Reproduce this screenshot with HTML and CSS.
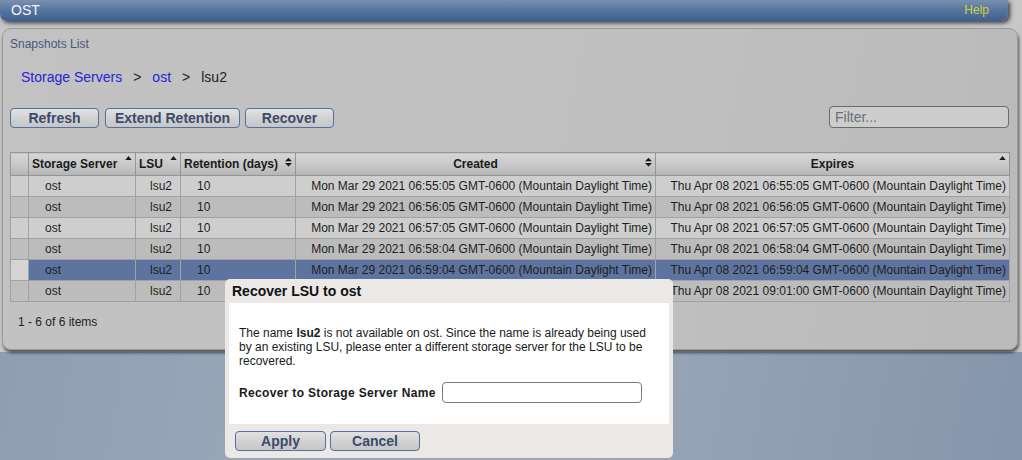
FILE: index.html
```html
<!DOCTYPE html>
<html>
<head>
<meta charset="utf-8">
<link rel="stylesheet" href="styles.css">
</head>
<body>
<div class="app">
  <div class="topbar">
    <span class="app-title">OST</span>
    <a class="help">Help</a>
  </div>
  <div class="panel">
    <div class="panel-title">Snapshots List</div>
    <div class="crumbs">
      <a class="crumb-link">Storage Servers</a><span class="sep">&gt;</span><a class="crumb-link">ost</a><span class="sep">&gt;</span><span class="crumb-cur">lsu2</span>
    </div>
    <div class="toolbar">
      <button class="btn btn-refresh">Refresh</button>
      <button class="btn btn-extend">Extend Retention</button>
      <button class="btn btn-recover">Recover</button>
      <input class="filter" placeholder="Filter...">
    </div>
    <table class="grid">
      <colgroup>
        <col class="c-sel"><col class="c-ss"><col class="c-lsu"><col class="c-ret"><col class="c-cr"><col class="c-ex">
      </colgroup>
      <thead>
        <tr>
          <th></th>
          <th class="th-left">Storage Server<svg class="sort up" width="7" height="4" viewBox="0 0 8 5"><path d="M0 5L4 0L8 5Z"/></svg></th>
          <th class="th-left">LSU<svg class="sort up" width="7" height="4" viewBox="0 0 8 5"><path d="M0 5L4 0L8 5Z"/></svg></th>
          <th class="th-left">Retention (days)<svg class="sort both" width="7" height="10" viewBox="0 0 8 10"><path d="M0 4L4 0L8 4Z M0 6L8 6L4 10Z"/></svg></th>
          <th>Created<svg class="sort both" width="7" height="10" viewBox="0 0 8 10"><path d="M0 4L4 0L8 4Z M0 6L8 6L4 10Z"/></svg></th>
          <th>Expires<svg class="sort up" width="7" height="4" viewBox="0 0 8 5"><path d="M0 5L4 0L8 5Z"/></svg></th>
        </tr>
      </thead>
      <tbody>
        <tr class="odd"><td class="sel"></td><td class="ss">ost</td><td class="lsu">lsu2</td><td class="ret">10</td><td class="dt">Mon Mar 29 2021 06:55:05 GMT-0600 (Mountain Daylight Time)</td><td class="dt">Thu Apr 08 2021 06:55:05 GMT-0600 (Mountain Daylight Time)</td></tr>
        <tr class="even"><td class="sel"></td><td class="ss">ost</td><td class="lsu">lsu2</td><td class="ret">10</td><td class="dt">Mon Mar 29 2021 06:56:05 GMT-0600 (Mountain Daylight Time)</td><td class="dt">Thu Apr 08 2021 06:56:05 GMT-0600 (Mountain Daylight Time)</td></tr>
        <tr class="odd"><td class="sel"></td><td class="ss">ost</td><td class="lsu">lsu2</td><td class="ret">10</td><td class="dt">Mon Mar 29 2021 06:57:05 GMT-0600 (Mountain Daylight Time)</td><td class="dt">Thu Apr 08 2021 06:57:05 GMT-0600 (Mountain Daylight Time)</td></tr>
        <tr class="even"><td class="sel"></td><td class="ss">ost</td><td class="lsu">lsu2</td><td class="ret">10</td><td class="dt">Mon Mar 29 2021 06:58:04 GMT-0600 (Mountain Daylight Time)</td><td class="dt">Thu Apr 08 2021 06:58:04 GMT-0600 (Mountain Daylight Time)</td></tr>
        <tr class="selected"><td class="sel"></td><td class="ss">ost</td><td class="lsu">lsu2</td><td class="ret">10</td><td class="dt">Mon Mar 29 2021 06:59:04 GMT-0600 (Mountain Daylight Time)</td><td class="dt">Thu Apr 08 2021 06:59:04 GMT-0600 (Mountain Daylight Time)</td></tr>
        <tr class="even"><td class="sel"></td><td class="ss">ost</td><td class="lsu">lsu2</td><td class="ret">10</td><td class="dt">Mon Mar 29 2021 09:01:00 GMT-0600 (Mountain Daylight Time)</td><td class="dt">Thu Apr 08 2021 09:01:00 GMT-0600 (Mountain Daylight Time)</td></tr>
      </tbody>
    </table>
    <div class="pager">1 - 6 of 6 items</div>
  </div>
</div>

<div class="dialog">
  <div class="dlg-title">Recover LSU to ost</div>
  <div class="dlg-body">
    <p class="dlg-text">The name <b>lsu2</b> is not available on ost. Since the name is already being used by an existing LSU, please enter a different storage server for the LSU to be recovered.</p>
    <div class="dlg-field">
      <label class="dlg-label">Recover to Storage Server Name</label>
      <input class="dlg-input">
    </div>
  </div>
  <div class="dlg-actions">
    <button class="btn btn-apply">Apply</button>
    <button class="btn btn-cancel">Cancel</button>
  </div>
</div>
</body>
</html>
```

FILE: styles.css
```css
html, body {
  margin: 0;
  padding: 0;
}
body {
  width: 1022px;
  height: 460px;
  overflow: hidden;
  font-family: "Liberation Sans", Arial, sans-serif;
  background: linear-gradient(100deg, #8d9cb0 0%, #98a6b8 30%, #9aa7b9 60%, #8595ab 100%);
  position: relative;
}
.app {
  background: #c7c7c7;
  padding-bottom: 2px;
}
.topbar {
  width: 1008px;
  height: 21px;
  box-sizing: border-box;
  background: linear-gradient(to bottom, #7a90b0 0%, #5a76a0 45%, #3e5f91 100%);
  border-radius: 0 0 7px 7px;
  box-shadow: 2px 2px 4px rgba(0, 0, 0, 0.7);
  display: flex;
  align-items: center;
  justify-content: space-between;
  padding: 0 19px 1px 11px;
}
.app-title {
  color: #f2f4f8;
  font-size: 14px;
}
.help {
  color: #c9d43c;
  font-size: 12px;
}
.panel {
  margin: 7px 4px 0 2px;
  height: 322px;
  box-sizing: border-box;
  background: linear-gradient(100deg, #c2c2c2 0%, #c0c0c0 60%, #bababa 100%);
  border: 1px solid #9a9a9a;
  border-radius: 9px;
  box-shadow: 1px 3px 3px rgba(0, 0, 0, 0.55);
  padding: 7px 8px 0 7px;
}
.panel-title {
  font-size: 12px;
  line-height: 16px;
  color: #4a5676;
}
.crumbs {
  margin-top: 16px;
  padding-left: 11px;
  font-size: 14px;
  line-height: 18px;
  display: flex;
}
.crumb-link {
  color: #2424d8;
}
.sep {
  color: #222;
  margin: 0 11px;
}
.crumb-cur {
  color: #222;
}
.toolbar {
  margin-top: 20px;
  display: flex;
  align-items: center;
  height: 22px;
}
.btn {
  font-family: "Liberation Sans", Arial, sans-serif;
  font-weight: bold;
  font-size: 14px;
  color: #3b4b6c;
  height: 20px;
  padding: 0;
  box-sizing: border-box;
  border: 1px solid #53709e;
  border-radius: 4px;
  background: linear-gradient(to bottom, #e2e2e2 0%, #d2d2d2 50%, #c6c6c6 100%);
  line-height: 18px;
}
.btn-refresh { width: 89px; margin-top: 2px; }
.btn-extend { width: 135px; margin-left: 6px; margin-top: 2px; }
.btn-recover { width: 89px; margin-left: 5px; margin-top: 2px; }
.filter {
  margin-left: auto;
  width: 180px;
  height: 22px;
  box-sizing: border-box;
  border: 1px solid #6a6a6a;
  border-radius: 4px;
  background: #cdcdcd;
  font-family: "Liberation Sans", Arial, sans-serif;
  font-size: 14px;
  padding: 0 5px;
  margin-right: 0;
}
.filter::placeholder {
  color: #6b6f78;
}
.grid {
  margin-top: 24px;
  border-collapse: collapse;
  table-layout: fixed;
  width: 999px;
  font-size: 12px;
  color: #1e1e1e;
}
.c-sel { width: 18px; }
.c-ss { width: 107px; }
.c-lsu { width: 45px; }
.c-ret { width: 115px; }
.c-cr { width: 360px; }
.c-ex { width: 354px; }
.grid th {
  height: 22px;
  border: 1px solid #959595;
  background: linear-gradient(to bottom, #d6d6d6 0%, #c8c8c8 50%, #b6b6b6 100%);
  font-weight: bold;
  font-size: 12px;
  color: #1a1a1a;
  text-align: center;
  position: relative;
  padding: 0;
  white-space: nowrap;
}
.grid th.th-left {
  text-align: left;
  padding-left: 3px;
}
.sort {
  position: absolute;
  right: 3px;
  fill: #1a1a1a;
}
.sort.up { top: 3px; }
.sort.both { top: 4px; }
.grid td {
  height: 20px;
  border: 1px solid #a2a2a2;
  padding: 0;
  white-space: nowrap;
}
tr.odd td { background: #cecece; }
tr.even td { background: #bcbcbc; }
tr.selected td { background: #5e74a0; }
tr.selected td.sel { background: #d4d4d4; }
tr.even td.sel { background: #bebebe; }
.ss { padding-left: 16px !important; }
.lsu { padding-left: 14px !important; }
.ret { padding-left: 16px !important; }
.dt { text-align: right; padding-right: 3px !important; }
.pager {
  margin-top: 12px;
  padding-left: 8px;
  font-size: 12px;
  line-height: 16px;
  color: #222;
}
.dialog {
  position: absolute;
  left: 225px;
  top: 279px;
  width: 448px;
  height: 179px;
  box-sizing: border-box;
  background: #ebe8e6;
  border-radius: 5px;
  padding: 0 4px;
  display: flex;
  flex-direction: column;
}
.dlg-title {
  height: 24px;
  line-height: 24px;
  padding-left: 3px;
  font-weight: bold;
  font-size: 14px;
  color: #111;
}
.dlg-body {
  background: #fff;
  height: 121px;
  box-sizing: border-box;
  padding: 23px 10px 0 10px;
  font-size: 12px;
  color: #1a1a1a;
}
.dlg-text {
  margin: 0;
  line-height: 14px;
}
.dlg-field {
  margin-top: 14px;
  display: flex;
  align-items: center;
}
.dlg-label {
  font-weight: bold;
  letter-spacing: 0.33px;
  margin-right: 6px;
}
.dlg-input {
  width: 200px;
  height: 21px;
  box-sizing: border-box;
  border: 1px solid #7a7a7a;
  border-radius: 4px;
  background: #fff;
  margin: 0;
}
.dlg-actions {
  display: flex;
  padding: 7px 0 0 6px;
}
.btn-apply { width: 91px; }
.btn-cancel { width: 90px; margin-left: 4px; }
```
